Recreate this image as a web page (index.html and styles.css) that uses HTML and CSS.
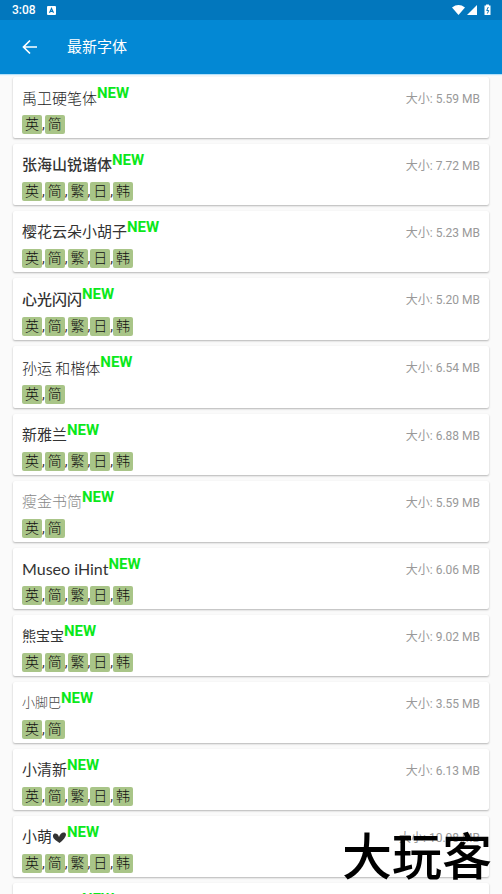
FILE: index.html
```html
<!DOCTYPE html>
<html lang="zh-CN">
<head>
<meta charset="utf-8">
<meta name="viewport" content="width=device-width, initial-scale=1">
<title>最新字体</title>
<link rel="stylesheet" href="styles.css">
</head>
<body>
<div class="statusbar">
  <span class="clock">3:08</span>
  <svg class="app-icon" viewBox="0 0 9 9" width="9" height="9" aria-hidden="true"><rect width="9" height="9" rx="1" fill="#fff"/><path d="M2.5 6.8 4.5 2.4 6.5 6.8M3.3 5.4h2.4" fill="none" stroke="#0277bd" stroke-width="1.1"/></svg>
  <svg class="system" viewBox="0 0 40 12" width="40" height="12" aria-hidden="true"><g fill="#fff"><path d="M0 3.400Q6.500-1.400 13 3.400L6.500 11z"/><path d="M25 1v10H15z"/><path d="M32.500 1.500H34V.5h3v1h1.500V11h-6z"/></g><path d="M36.300 3 34.700 6.500h2L35.400 9.500" fill="none" stroke="#0277bd" stroke-width="1"/></svg>
</div>
<header class="toolbar">
  <button class="back" type="button" aria-label="返回"><svg viewBox="0 0 16 16" width="16" height="16"><path d="M15 8H2M8 1.500 1.500 8 8 14.500" fill="none" stroke="#fff" stroke-width="1.700"/></svg></button>
  <h1>最新字体</h1>
</header>
<main>
<ul class="list">
  <li class="card"><div class="head"><a class="name pen" href="#">禹卫硬笔体</a><span class="new">NEW</span><span class="size">大小: 5.59 MB</span></div><div class="tags"><span>英</span>,<span>简</span></div></li>
  <li class="card"><div class="head"><a class="name medium" href="#">张海山锐谐体</a><span class="new">NEW</span><span class="size">大小: 7.72 MB</span></div><div class="tags"><span>英</span>,<span>简</span>,<span>繁</span>,<span>日</span>,<span>韩</span></div></li>
  <li class="card"><div class="head"><a class="name" href="#">樱花云朵小胡子</a><span class="new">NEW</span><span class="size">大小: 5.23 MB</span></div><div class="tags"><span>英</span>,<span>简</span>,<span>繁</span>,<span>日</span>,<span>韩</span></div></li>
  <li class="card"><div class="head tall"><a class="name medium" href="#">心光闪闪</a><span class="new">NEW</span><span class="size">大小: 5.20 MB</span></div><div class="tags"><span>英</span>,<span>简</span>,<span>繁</span>,<span>日</span>,<span>韩</span></div></li>
  <li class="card"><div class="head tall"><a class="name pen" href="#">孙运 和楷体</a><span class="new">NEW</span><span class="size">大小: 6.54 MB</span></div><div class="tags"><span>英</span>,<span>简</span></div></li>
  <li class="card"><div class="head"><a class="name" href="#">新雅兰</a><span class="new">NEW</span><span class="size">大小: 6.88 MB</span></div><div class="tags"><span>英</span>,<span>简</span>,<span>繁</span>,<span>日</span>,<span>韩</span></div></li>
  <li class="card"><div class="head"><a class="name faint" href="#">瘦金书简</a><span class="new">NEW</span><span class="size">大小: 5.59 MB</span></div><div class="tags"><span>英</span>,<span>简</span></div></li>
  <li class="card"><div class="head"><a class="name latin" href="#">Museo iHint</a><span class="new">NEW</span><span class="size">大小: 6.06 MB</span></div><div class="tags"><span>英</span>,<span>简</span>,<span>繁</span>,<span>日</span>,<span>韩</span></div></li>
  <li class="card"><div class="head"><a class="name small" href="#">熊宝宝</a><span class="new">NEW</span><span class="size">大小: 9.02 MB</span></div><div class="tags"><span>英</span>,<span>简</span>,<span>繁</span>,<span>日</span>,<span>韩</span></div></li>
  <li class="card"><div class="head"><a class="name tiny" href="#">小脚巴</a><span class="new">NEW</span><span class="size">大小: 3.55 MB</span></div><div class="tags"><span>英</span>,<span>简</span></div></li>
  <li class="card"><div class="head"><a class="name" href="#">小清新</a><span class="new">NEW</span><span class="size">大小: 6.13 MB</span></div><div class="tags"><span>英</span>,<span>简</span>,<span>繁</span>,<span>日</span>,<span>韩</span></div></li>
  <li class="card"><div class="head"><a class="name heart" href="#">小萌<svg viewBox="0 0 15 15" width="15" height="15" aria-hidden="true"><path d="M7.500 13C5 11 .5 9 1 5.500 1.600 2.600 6 3 7 7 8 3.500 11 1.500 13.300 3 15.500 5 12 10 7.500 13z" fill="#333"/></svg></a><span class="new">NEW</span><span class="size">大小: 10.08 MB</span></div><div class="tags"><span>英</span>,<span>简</span>,<span>繁</span>,<span>日</span>,<span>韩</span></div></li>
  <li class="card"><div class="head"><span class="name pending"></span><span class="new">NEW</span></div><div class="tags"></div></li>
</ul>
</main>
<div class="watermark">大玩客</div>
</body>
</html>
```
FILE: styles.css
```css
* { box-sizing: border-box; }

body {
  margin: 0;
  height: 100vh;
  display: flex;
  flex-direction: column;
  overflow: hidden;
  background: #fafafa;
  color: #333;
  font-family: Roboto, "Noto Sans CJK SC", sans-serif;
}

.statusbar {
  flex: none;
  display: flex;
  align-items: center;
  gap: 11px;
  height: 20px;
  padding: 0 10px 0 12px;
  background: #0277bd;
  color: #fff;
}

.clock { font-size: 12px; font-weight: 500; }

.system { margin-left: auto; }

.toolbar {
  flex: none;
  display: flex;
  align-items: center;
  gap: 29px;
  height: 54px;
  padding: 0 22px;
  background: #0388d4;
  color: #fff;
  box-shadow: 0 1px 1px #b3e0fa;
}

.back {
  display: flex;
  padding: 0;
  border: 0;
  background: none;
}

.toolbar h1 {
  margin: 0;
  padding-bottom: 3px;
  font-size: 15px;
  font-weight: 400;
}

main {
  flex: 1;
  min-height: 0;
  overflow: hidden;
}

.list {
  display: flex;
  flex-direction: column;
  gap: 6px;
  margin: 0;
  padding: 3px 13px;
  list-style: none;
}

.card {
  padding: 8px 9px 4px;
  border-radius: 2px;
  background: #fff;
  box-shadow: 0 1px 2px rgba(0, 0, 0, 0.28);
}

.head {
  display: flex;
  align-items: center;
  height: 26px;
}

.head.tall { height: 27px; }

.name {
  color: #333;
  font-size: 15px;
  line-height: 22px;
  text-decoration: none;
}

.pen { font-family: "Noto Sans CJK SC", sans-serif; font-weight: 300; color: #222; }
.medium { font-weight: 500; }
.faint { font-weight: 300; color: #888; }
.latin { font-family: Lato, sans-serif; font-size: 16px; }
.small { font-size: 14px; }
.tiny { font-size: 13px; font-weight: 300; color: #444; }
.heart { display: flex; align-items: center; }
.pending { width: 60px; }

.new {
  align-self: flex-start;
  color: #0be81b;
  font-size: 15px;
  font-weight: 700;
  line-height: 17px;
}

.size {
  align-self: flex-start;
  margin-left: auto;
  color: #999;
  font-size: 12px;
  line-height: 28px;
}

.tags {
  display: flex;
  height: 19px;
  margin-top: 4px;
  font-size: 14px;
  line-height: 19px;
}

.tags span {
  padding: 0 3px;
  border-radius: 2px;
  background: #a9c588;
  font-weight: 300;
  color: #111;
}

.watermark {
  position: fixed;
  right: 10px;
  bottom: 16px;
  color: #000;
  font-family: "Noto Sans CJK SC", sans-serif;
  font-size: 50px;
  font-weight: 500;
  line-height: 50px;
  pointer-events: none;
}
```
